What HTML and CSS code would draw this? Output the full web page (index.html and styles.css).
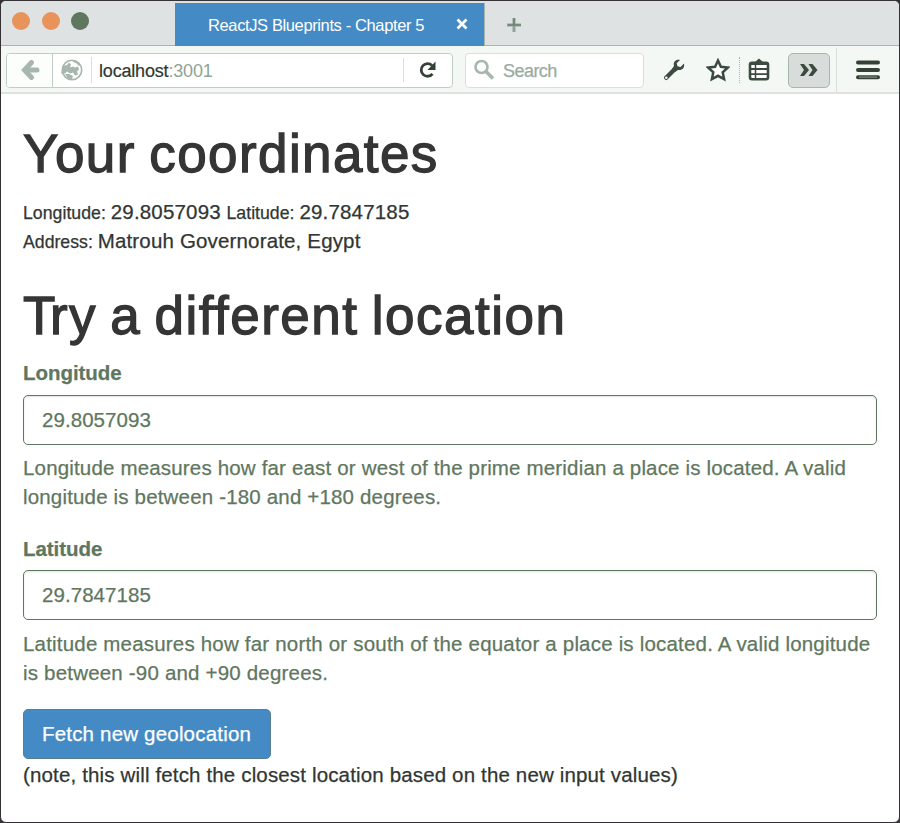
FILE: index.html
```html
<!DOCTYPE html>
<html lang="en">
<head>
<meta charset="utf-8">
<title>ReactJS Blueprints - Chapter 5</title>
<link rel="stylesheet" href="styles.css">
</head>
<body>
<div class="window">
  <header class="tabbar">
    <div class="lights"><i class="light"></i><i class="light"></i><i class="light green"></i></div>
    <div class="tab">
      <span class="tab-title">ReactJS Blueprints - Chapter 5</span>
      <svg class="close" width="12" height="12" viewBox="0 0 12 12"><path d="M1.500 1.500l9 9M10.500 1.500l-9 9" stroke="#fff" stroke-width="2.700"/></svg>
    </div>
    <svg class="plus" width="16" height="16" viewBox="0 0 16 16"><path d="M8 1v14M1 8h14" stroke="#8fa397" stroke-width="3"/><path d="M8 1v7M2 8h13" stroke="#627767" stroke-width="1.200"/></svg>
  </header>
  <nav class="toolbar">
    <div class="urlbar">
      <div class="back"><svg width="20" height="20" viewBox="0 0 20 20"><path d="M11.500 2.500L4.500 10l7 7.500M6 10h11" fill="none" stroke="#a8b7ae" stroke-width="5" stroke-linecap="round"/></svg></div>
      <div class="globe"><svg width="22" height="22" viewBox="0 0 22 22"><circle cx="11" cy="11" r="9.700" fill="#fff" stroke="#a8b7ae" stroke-width="1.600"/><path d="M11 1.500l4 .5 4.500 4-1.500 1-3-3-2-.5zM2 7l4-1 2-2.500 2 2-1 3 3-1 2 1 3-1 1 3-2 2 1 3-3 1-2-3-3 1-3-2-2 2-4 0zM4 15l4 0 4 2-1 3.500-4-1z" fill="#a8b7ae"/></svg></div>
      <div class="url"><span class="host">localhost</span>:3001</div>
      <div class="reload"><svg width="20" height="20" viewBox="0 0 20 20"><path d="M14.500 13.800A6.300 6.300 0 1 1 14 5.500" fill="none" stroke="#354037" stroke-width="2.800"/><path d="M17.500 1.500v8.500h-8z" fill="#354037"/></svg></div>
    </div>
    <div class="search">
      <svg width="22" height="22" viewBox="0 0 22 22"><circle cx="8.500" cy="8" r="6" fill="none" stroke="#a8b7ae" stroke-width="2.600"/><path d="M13 12.500l7 7" stroke="#a8b7ae" stroke-width="3.600"/></svg>
      <span>Search</span>
    </div>
    <svg class="wrench" width="22" height="22" viewBox="0 0 22 22"><path d="M3.200 18.800l9-9" stroke="#3d4a40" stroke-width="4.400" stroke-linecap="round"/><path d="M17 1c-4-1-7.200 2-6 6l-2 3 3 3 3-2c4.200.8 7-2.500 6-6.500l-3.500 3.500-3-.7-.8-3z" fill="#3d4a40"/><circle cx="3.300" cy="18.700" r="1.300" fill="#f3f8f4"/></svg>
    <svg class="star" width="24" height="24" viewBox="0 0 24 24"><path d="M12 2.500l2.900 6.300 6.900.8-5.100 4.700 1.400 6.900-6.100-3.400-6.100 3.400 1.400-6.900-5.100-4.700 6.900-.8z" fill="#fff" stroke="#3d4a40" stroke-width="2.500"/></svg>
    <i class="dots"></i>
    <svg class="list" width="22" height="24" viewBox="0 0 22 24"><path d="M6.500 4.500L11 .5l4.500 4z" fill="#3d4a40"/><rect x="2" y="4.800" width="18" height="16.500" rx="2" fill="#fff" stroke="#3d4a40" stroke-width="2.600"/><path d="M2 6h18M2 11h18M2 16.200h18" stroke="#3d4a40" stroke-width="1.800"/><path d="M7.500 6v15" stroke="#3d4a40" stroke-width="1.500"/></svg>
    <div class="more"><svg width="20" height="14" viewBox="0 0 20 14"><path d="M1 1h4l5 6-5 6h-4l4-6zM9.500 1h4l5 6-5 6h-4l4-6z" fill="#3d4a40"/></svg></div>
    <i class="divider"></i>
    <svg class="menu" width="24" height="20" viewBox="0 0 24 20"><path d="M2 2.500h20M2 10h20M2 17.200h20" stroke="#354037" stroke-width="4" stroke-linecap="round"/><path d="M3 17.200h18" stroke="#627767" stroke-width="1.800"/></svg>
  </nav>
  <main class="page">
    <h1><span class="h-a">Your coordinates</span></h1>
    <p class="line"><small class="lon">Longitude: </small><span class="n">29.8057093</span> <small class="lat">Latitude: </small><span class="n">29.7847185</span></p>
    <p class="line"><small class="adr">Address: </small><span class="place">Matrouh Governorate, Egypt</span></p>
    <h1 class="second"><span class="h-b"><span class="cap">T</span>ry a different location</span></h1>
    <section class="group">
      <label for="lon">Longitude</label>
      <input id="lon" value="29.8057093">
      <p class="help">Longitude measures how far east or west of the prime meridian a place is located. A valid<br>longitude is between -180 and +180 degrees.</p>
    </section>
    <section class="group">
      <label for="lat">Latitude</label>
      <input id="lat" value="29.7847185">
      <p class="help wide">Latitude measures how far north or south of the equator a place is located. A valid longitude<br>is between -90 and +90 degrees.</p>
    </section>
    <button>Fetch new geolocation</button>
    <p class="note">(note, this will fetch the closest location based on the new input values)</p>
  </main>
</div>
</body>
</html>
```
FILE: styles.css
```css
* { box-sizing: border-box; }
body { margin: 0; background: #353236; font-family: "Liberation Sans", Arial, sans-serif; -webkit-text-stroke: .25px currentColor; }
svg { display: block; flex: none; }
p, h1 { margin: 0; white-space: nowrap; }
.window { width: 900px; height: 823px; border: 1px solid #353236; border-radius: 6px; overflow: hidden; background: #fff; }
.tabbar { height: 45px; display: flex; background: #dfe2e3; border-bottom: 1px solid #a8b4ae; }
.lights { width: 174px; display: flex; gap: 11px; padding: 11px 0 0 11px; }
.light { width: 18px; height: 18px; border-radius: 50%; background: #e8935a; margin-right: 1px; }
.light.green { background: #5f775f; margin-left: -1px; }
.tab { width: 310px; height: 43px; margin-top: 2px; background: #448bc5; border-right: 1px solid #a8b4ae; display: flex; align-items: center; justify-content: space-between; padding: 0 16px 0 33px; color: #fff; }
.tab-title { font-size: 16.500px; letter-spacing: -.38px; white-space: nowrap; padding-top: 2px; -webkit-text-stroke: 0; }
.close { margin-top: -1px; }
.plus { margin: 16px 0 0 21px; }
.toolbar { height: 48px; display: flex; align-items: center; padding-top: 2px; background: #f3f8f4; border-bottom: 2px solid #dde1df; }
.urlbar { width: 447px; height: 35px; margin-left: 5px; display: flex; align-items: center; background: #fff; border: 1px solid #c2ccc6; border-radius: 4px; }
.back { width: 46px; height: 33px; display: flex; align-items: center; justify-content: center; border-right: 1px solid #c2ccc6; background: #fcfefc; border-radius: 3px 0 0 3px; }
.globe { width: 39px; height: 26px; display: flex; align-items: center; justify-content: center; border-right: 1px solid #d9dfdc; }
.url { flex: 1; padding: 2px 0 0 7px; font-size: 18px; letter-spacing: -.18px; color: #8fa397; -webkit-text-stroke: 0; }
.host { color: #2f3831; -webkit-text-stroke: .2px #2f3831; }
.reload { width: 49px; height: 24px; display: flex; align-items: center; justify-content: center; border-left: 1px solid #d9dfdc; }
.search { width: 179px; height: 35px; margin-left: 12px; padding-left: 7px; display: flex; align-items: center; gap: 8px; background: #fff; border: 1.500px solid #d9dfdc; border-radius: 4px; color: #9aaba1; font-size: 18px; letter-spacing: -.55px; }
.search span { padding-top: 2px; }
.wrench { margin-left: 19px; }
.star { margin-left: 21px; }
.dots { height: 26px; border-left: 1px dotted #a8b4ae; margin-left: 9px; }
.list { margin-left: 8px; }
.more { width: 42px; height: 35px; margin-left: 18px; display: flex; align-items: center; justify-content: center; background: #d8dddb; border: 1px solid #a8b7ae; border-radius: 5px; }
.divider { height: 44px; border-left: 1px solid #d9dfdc; margin-left: 6px; }
.menu { margin-left: 19px; }
.page { padding: 31px 22px 0; font-size: 20.500px; color: #303632; }
h1 { height: 58px; line-height: 58px; font-size: 53px; font-weight: 400; color: #353535; margin-bottom: 14px; -webkit-text-stroke: 1.300px #353535; }
.h-a { letter-spacing: 1.400px; word-spacing: -2.500px; }
.h-b { letter-spacing: 1.500px; word-spacing: -3px; }
.cap { letter-spacing: -5.500px; }
h1.second { margin-top: 31px; }
.line { height: 29.300px; line-height: 29.300px; white-space: pre; }
small { font-size: 17.700px; }
.lon, .lat { letter-spacing: .020px; }
.adr { letter-spacing: 0; }
.n { letter-spacing: .170px; }
.place { letter-spacing: .160px; }
.group { height: 175.500px; color: #5f775f; }
.group + .group { padding-top: .5px; }
.group + .group label { height: 35px; }
.group + .group .help { margin-top: 9px; }
label { display: block; height: 36px; line-height: 28px; font-weight: 700; letter-spacing: -.05px; }
input { display: block; width: 854px; height: 50px; padding: 1px 18px; font: inherit; letter-spacing: .060px; color: inherit; border: 1.500px solid #5f775f; border-radius: 5px; background: #fff; outline: 0; box-shadow: inset 0 1px 2px #dfe6e0; }
.help { margin-top: 8px; line-height: 29.300px; letter-spacing: .170px; }
.help.wide { letter-spacing: .190px; }
button { display: block; width: 248px; height: 50px; margin-top: -1px; padding: 1px 1px 0 0; font: inherit; letter-spacing: .190px; color: #fff; background: #448bc5; border: 1px solid #577f92; border-radius: 5px; white-space: nowrap; }
.note { line-height: 29.300px; margin-top: 1px; letter-spacing: .150px; }
```
